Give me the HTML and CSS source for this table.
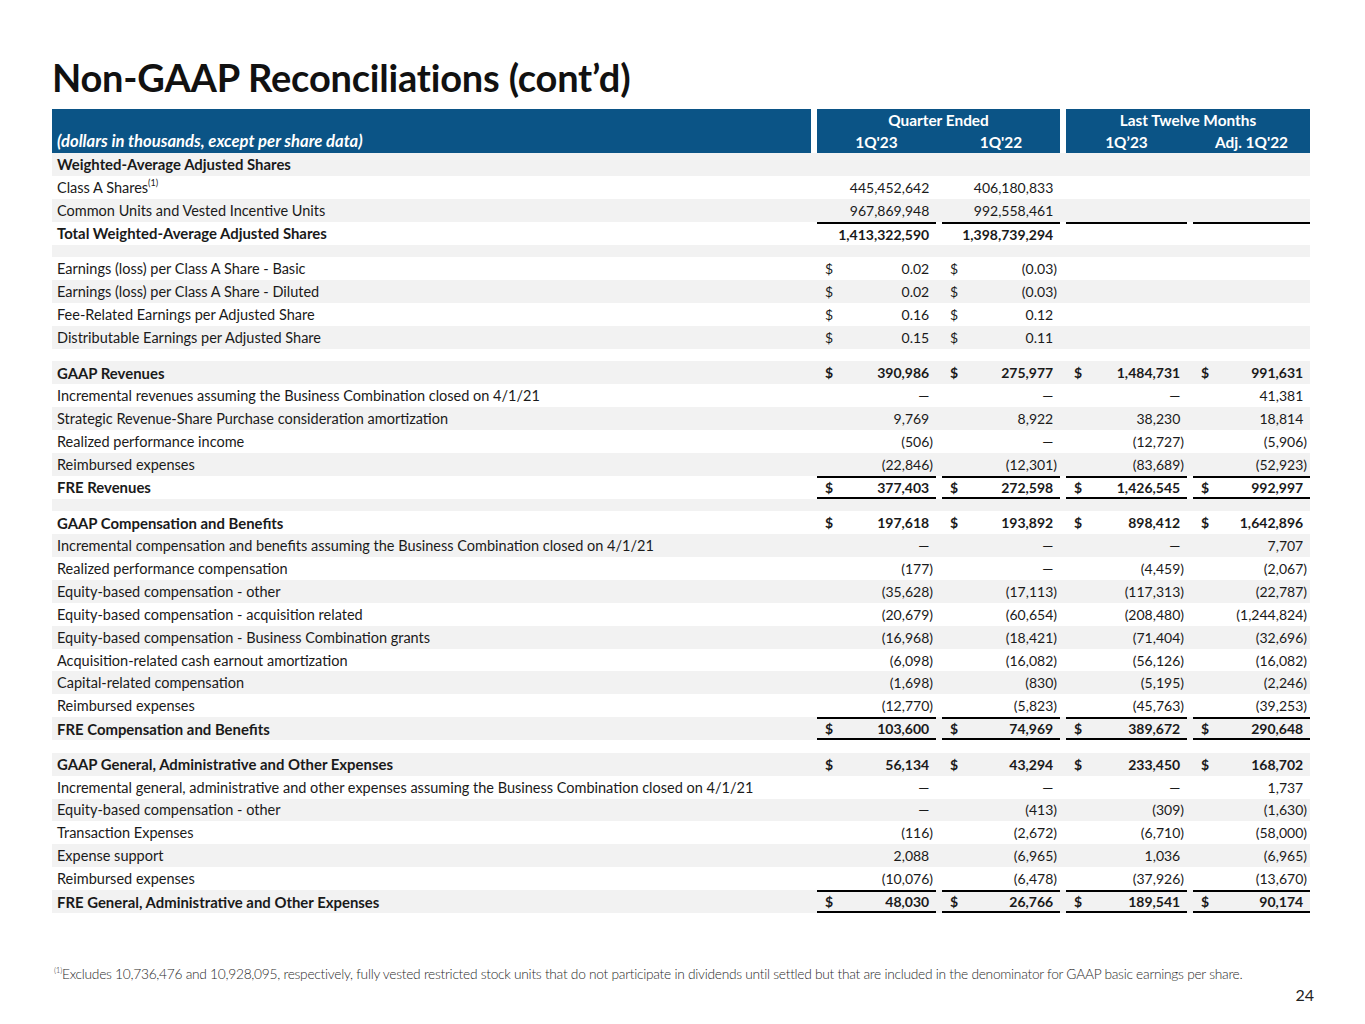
FILE: index.html
```html
<!DOCTYPE html>
<html lang="en">
<head>
<meta charset="utf-8">
<title>Non-GAAP Reconciliations (cont’d)</title>
<link rel="stylesheet" href="styles.css">
</head>
<body>
<div class="page">
  <h1 class="title">Non-GAAP Reconciliations (cont’d)</h1>

  <div class="table">
    <div class="head">
      <div class="h-label">(dollars in thousands, except per share data)</div>
      <div class="h-group h-qe">
        <div class="h-title">Quarter Ended</div>
        <div class="h-sub"><span>1Q'23</span><span>1Q'22</span></div>
      </div>
      <div class="h-group h-ltm">
        <div class="h-title">Last Twelve Months</div>
        <div class="h-sub"><span>1Q’23</span><span>Adj. 1Q'22</span></div>
      </div>
    </div>

    <div class="body">
      <div class="r b"><div class="l">Weighted-Average Adjusted Shares</div><div class="v"></div><div class="v"></div><div class="v"></div><div class="v"></div></div>
      <div class="r"><div class="l">Class A Shares<sup>(1)</sup></div><div class="v"><span></span><span class="n">445,452,642</span></div><div class="v"><span></span><span class="n">406,180,833</span></div><div class="v"></div><div class="v"></div></div>
      <div class="r"><div class="l">Common Units and Vested Incentive Units</div><div class="v"><span></span><span class="n">967,869,948</span></div><div class="v"><span></span><span class="n">992,558,461</span></div><div class="v"></div><div class="v"></div></div>
      <div class="r b top"><div class="l">Total Weighted-Average Adjusted Shares</div><div class="v"><span></span><span class="n">1,413,322,590</span></div><div class="v"><span></span><span class="n">1,398,739,294</span></div><div class="v"></div><div class="v"></div></div>
      <div class="r sp"></div>

      <div class="r"><div class="l">Earnings (loss) per Class A Share - Basic</div><div class="v"><span>$</span><span class="n">0.02</span></div><div class="v"><span>$</span><span class="n neg">(0.03)</span></div><div class="v"></div><div class="v"></div></div>
      <div class="r"><div class="l">Earnings (loss) per Class A Share - Diluted</div><div class="v"><span>$</span><span class="n">0.02</span></div><div class="v"><span>$</span><span class="n neg">(0.03)</span></div><div class="v"></div><div class="v"></div></div>
      <div class="r"><div class="l">Fee-Related Earnings per Adjusted Share</div><div class="v"><span>$</span><span class="n">0.16</span></div><div class="v"><span>$</span><span class="n">0.12</span></div><div class="v"></div><div class="v"></div></div>
      <div class="r"><div class="l">Distributable Earnings per Adjusted Share</div><div class="v"><span>$</span><span class="n">0.15</span></div><div class="v"><span>$</span><span class="n">0.11</span></div><div class="v"></div><div class="v"></div></div>
      <div class="r sp"></div>

      <div class="r b"><div class="l">GAAP Revenues</div><div class="v"><span>$</span><span class="n">390,986</span></div><div class="v"><span>$</span><span class="n">275,977</span></div><div class="v"><span>$</span><span class="n">1,484,731</span></div><div class="v"><span>$</span><span class="n">991,631</span></div></div>
      <div class="r"><div class="l">Incremental revenues assuming the Business Combination closed on 4/1/21</div><div class="v"><span></span><span class="n">—</span></div><div class="v"><span></span><span class="n">—</span></div><div class="v"><span></span><span class="n">—</span></div><div class="v"><span></span><span class="n">41,381</span></div></div>
      <div class="r"><div class="l">Strategic Revenue-Share Purchase consideration amortization</div><div class="v"><span></span><span class="n">9,769</span></div><div class="v"><span></span><span class="n">8,922</span></div><div class="v"><span></span><span class="n">38,230</span></div><div class="v"><span></span><span class="n">18,814</span></div></div>
      <div class="r"><div class="l">Realized performance income</div><div class="v"><span></span><span class="n neg">(506)</span></div><div class="v"><span></span><span class="n">—</span></div><div class="v"><span></span><span class="n neg">(12,727)</span></div><div class="v"><span></span><span class="n neg">(5,906)</span></div></div>
      <div class="r"><div class="l">Reimbursed expenses</div><div class="v"><span></span><span class="n neg">(22,846)</span></div><div class="v"><span></span><span class="n neg">(12,301)</span></div><div class="v"><span></span><span class="n neg">(83,689)</span></div><div class="v"><span></span><span class="n neg">(52,923)</span></div></div>
      <div class="r b top bottom"><div class="l">FRE Revenues</div><div class="v"><span>$</span><span class="n">377,403</span></div><div class="v"><span>$</span><span class="n">272,598</span></div><div class="v"><span>$</span><span class="n">1,426,545</span></div><div class="v"><span>$</span><span class="n">992,997</span></div></div>
      <div class="r sp"></div>

      <div class="r b"><div class="l">GAAP Compensation and Benefits</div><div class="v"><span>$</span><span class="n">197,618</span></div><div class="v"><span>$</span><span class="n">193,892</span></div><div class="v"><span>$</span><span class="n">898,412</span></div><div class="v"><span>$</span><span class="n">1,642,896</span></div></div>
      <div class="r"><div class="l">Incremental compensation and benefits assuming the Business Combination closed on 4/1/21</div><div class="v"><span></span><span class="n">—</span></div><div class="v"><span></span><span class="n">—</span></div><div class="v"><span></span><span class="n">—</span></div><div class="v"><span></span><span class="n">7,707</span></div></div>
      <div class="r"><div class="l">Realized performance compensation</div><div class="v"><span></span><span class="n neg">(177)</span></div><div class="v"><span></span><span class="n">—</span></div><div class="v"><span></span><span class="n neg">(4,459)</span></div><div class="v"><span></span><span class="n neg">(2,067)</span></div></div>
      <div class="r"><div class="l">Equity-based compensation - other</div><div class="v"><span></span><span class="n neg">(35,628)</span></div><div class="v"><span></span><span class="n neg">(17,113)</span></div><div class="v"><span></span><span class="n neg">(117,313)</span></div><div class="v"><span></span><span class="n neg">(22,787)</span></div></div>
      <div class="r"><div class="l">Equity-based compensation - acquisition related</div><div class="v"><span></span><span class="n neg">(20,679)</span></div><div class="v"><span></span><span class="n neg">(60,654)</span></div><div class="v"><span></span><span class="n neg">(208,480)</span></div><div class="v"><span></span><span class="n neg">(1,244,824)</span></div></div>
      <div class="r"><div class="l">Equity-based compensation - Business Combination grants</div><div class="v"><span></span><span class="n neg">(16,968)</span></div><div class="v"><span></span><span class="n neg">(18,421)</span></div><div class="v"><span></span><span class="n neg">(71,404)</span></div><div class="v"><span></span><span class="n neg">(32,696)</span></div></div>
      <div class="r"><div class="l">Acquisition-related cash earnout amortization</div><div class="v"><span></span><span class="n neg">(6,098)</span></div><div class="v"><span></span><span class="n neg">(16,082)</span></div><div class="v"><span></span><span class="n neg">(56,126)</span></div><div class="v"><span></span><span class="n neg">(16,082)</span></div></div>
      <div class="r"><div class="l">Capital-related compensation</div><div class="v"><span></span><span class="n neg">(1,698)</span></div><div class="v"><span></span><span class="n neg">(830)</span></div><div class="v"><span></span><span class="n neg">(5,195)</span></div><div class="v"><span></span><span class="n neg">(2,246)</span></div></div>
      <div class="r"><div class="l">Reimbursed expenses</div><div class="v"><span></span><span class="n neg">(12,770)</span></div><div class="v"><span></span><span class="n neg">(5,823)</span></div><div class="v"><span></span><span class="n neg">(45,763)</span></div><div class="v"><span></span><span class="n neg">(39,253)</span></div></div>
      <div class="r b top bottom"><div class="l">FRE Compensation and Benefits</div><div class="v"><span>$</span><span class="n">103,600</span></div><div class="v"><span>$</span><span class="n">74,969</span></div><div class="v"><span>$</span><span class="n">389,672</span></div><div class="v"><span>$</span><span class="n">290,648</span></div></div>
      <div class="r sp"></div>

      <div class="r b"><div class="l">GAAP General, Administrative and Other Expenses</div><div class="v"><span>$</span><span class="n">56,134</span></div><div class="v"><span>$</span><span class="n">43,294</span></div><div class="v"><span>$</span><span class="n">233,450</span></div><div class="v"><span>$</span><span class="n">168,702</span></div></div>
      <div class="r"><div class="l">Incremental general, administrative and other expenses assuming the Business Combination closed on 4/1/21</div><div class="v"><span></span><span class="n">—</span></div><div class="v"><span></span><span class="n">—</span></div><div class="v"><span></span><span class="n">—</span></div><div class="v"><span></span><span class="n">1,737</span></div></div>
      <div class="r"><div class="l">Equity-based compensation - other</div><div class="v"><span></span><span class="n">—</span></div><div class="v"><span></span><span class="n neg">(413)</span></div><div class="v"><span></span><span class="n neg">(309)</span></div><div class="v"><span></span><span class="n neg">(1,630)</span></div></div>
      <div class="r"><div class="l">Transaction Expenses</div><div class="v"><span></span><span class="n neg">(116)</span></div><div class="v"><span></span><span class="n neg">(2,672)</span></div><div class="v"><span></span><span class="n neg">(6,710)</span></div><div class="v"><span></span><span class="n neg">(58,000)</span></div></div>
      <div class="r"><div class="l">Expense support</div><div class="v"><span></span><span class="n">2,088</span></div><div class="v"><span></span><span class="n neg">(6,965)</span></div><div class="v"><span></span><span class="n">1,036</span></div><div class="v"><span></span><span class="n neg">(6,965)</span></div></div>
      <div class="r"><div class="l">Reimbursed expenses</div><div class="v"><span></span><span class="n neg">(10,076)</span></div><div class="v"><span></span><span class="n neg">(6,478)</span></div><div class="v"><span></span><span class="n neg">(37,926)</span></div><div class="v"><span></span><span class="n neg">(13,670)</span></div></div>
      <div class="r b top bottom"><div class="l">FRE General, Administrative and Other Expenses</div><div class="v"><span>$</span><span class="n">48,030</span></div><div class="v"><span>$</span><span class="n">26,766</span></div><div class="v"><span>$</span><span class="n">189,541</span></div><div class="v"><span>$</span><span class="n">90,174</span></div></div>
    </div>
  </div>

  <p class="note"><sup>(1)</sup>Excludes 10,736,476 and 10,928,095, respectively, fully vested restricted stock units that do not participate in dividends until settled but that are included in the denominator for GAAP basic earnings per share.</p>
  <div class="pagenum">24</div>
</div>
</body>
</html>
```
FILE: styles.css
```css
* { box-sizing: border-box; }
html, body { margin: 0; padding: 0; background: #fff; }
body {
  font-family: Lato, "Noto Sans", "Liberation Sans", sans-serif;
  color: #1a1a1a;
  width: 1365px;
  height: 1024px;
  overflow: hidden;
}
.page { padding: 0 55px 0 52px; }

.title {
  margin: 0;
  padding-top: 55px;
  height: 109px;
  font-size: 38px;
  line-height: 44px;
  font-weight: 700;
  color: #111;
  letter-spacing: -0.2px;
}

.table { width: 1258px; font-size: 14px; }

/* header */
.head {
  display: grid;
  grid-template-columns: 759px 243px 244px;
  column-gap: 6px;
  height: 44px;
  color: #fff;
  font-weight: 700;
}
.h-label {
  background: #0b5486;
  display: flex;
  align-items: flex-end;
  padding: 0 0 2px 5px;
  font-style: italic;
  font-size: 16.6px;
}
.h-group {
  background: #0b5486;
  display: grid;
  grid-template-rows: 22px 22px;
}
.h-title { text-align: center; line-height: 22px; font-size: 15.4px; }
.h-sub { display: grid; column-gap: 6px; line-height: 22px; font-size: 15.4px; }
.h-qe .h-sub { grid-template-columns: 119px 118px; }
.h-ltm .h-sub { grid-template-columns: 121px 117px; }
.h-sub span { text-align: center; }

/* body rows */
.r {
  display: grid;
  grid-template-columns: 759px 119px 118px 121px 117px;
  column-gap: 6px;
  height: 22.9px;
  align-items: stretch;
}
.body .r:nth-child(odd) { background: #f2f2f2; }
.r.sp { height: 12.6px; }
.l {
  padding-left: 5px;
  display: flex;
  align-items: center;
  white-space: nowrap;
  font-size: 14.5px;
}
.b .l { font-size: 14.9px; }
.l sup { font-size: 9px; align-self: flex-start; margin-top: 1px; }
.v {
  display: flex;
  justify-content: space-between;
  align-items: center;
  padding: 0 3px 0 8px;
}
.n::after { content: ")"; visibility: hidden; }
.n.neg::after { content: none; }
.b { font-weight: 700; }
.top .v { border-top: 2px solid #000; }
.bottom .v { border-bottom: 2px solid #000; }

/* footer */
.note {
  margin: 52px 0 0 2px;
  font-size: 13.75px;
  font-weight: 300;
  color: #2a2a2a;
  letter-spacing: -0.27px;
  white-space: nowrap;
}
.note sup { font-size: 8px; }
.pagenum {
  text-align: right;
  font-size: 16px;
  color: #222;
  margin: 3px 0 0 0;
  width: 1262px;
}
```
